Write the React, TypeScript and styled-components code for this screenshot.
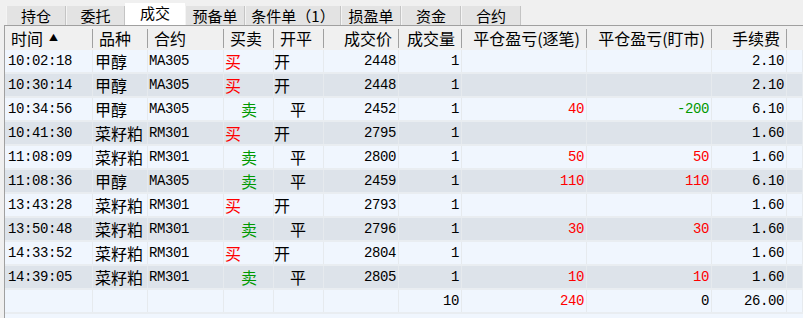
import React from "react";
import styled, { createGlobalStyle } from "styled-components";

const GlobalStyle = createGlobalStyle`
  html, body { margin: 0; padding: 0; background: #f0f0f0; }
  body { font-family: "Noto Sans CJK SC", "Noto Sans", sans-serif; }
`;

const COLS = [88, 55, 76, 50, 50, 75, 63, 125, 125, 75];
const TEMPLATE = `${COLS.map((w) => `${w}px`).join(" ")} 1fr`;

const CJK = `"Noto Sans CJK SC", "Noto Sans", sans-serif`;
const MONO = `"Liberation Mono", "Noto Sans CJK SC", monospace`;

const Page = styled.div`
  width: 803px;
  height: 318px;
  overflow: hidden;
  display: flex;
  flex-direction: column;
  background: #f0f0f0;
`;

const TabBar = styled.div`
  height: 25px;
  display: flex;
  align-items: flex-end;
  padding-left: 6px;
`;

const Tab = styled.div<{ $w: number; $active?: boolean }>`
  width: ${(p) => p.$w}px;
  height: ${(p) => (p.$active ? 22 : 19)}px;
  box-sizing: border-box;
  display: flex;
  align-items: center;
  justify-content: center;
  padding-bottom: ${(p) => (p.$active ? 3 : 1)}px;
  background: ${(p) => (p.$active ? "#ffffff" : "#e3e3e3")};
  border-right: 1px solid ${(p) => (p.$active ? "#ffffff" : "#c4c4c4")};
  border-left: 1px solid ${(p) => (p.$active ? "#ffffff" : "#f4f4f4")};
  font-family: ${CJK};
  font-size: 15px;
  line-height: 1;
  color: #000;
  white-space: nowrap;
`;

const Panel = styled.div`
  flex: 1;
  margin-left: 4px;
  border-left: 1px solid #a0a0a0;
  border-top: 1px solid #a0a0a0;
  display: flex;
  flex-direction: column;
  min-height: 0;
`;

const HeaderRow = styled.div`
  height: 24px;
  display: grid;
  grid-template-columns: ${TEMPLATE};
  align-items: center;
  background: #f0f0f0;
`;

const HeaderCell = styled.div<{ $right?: boolean; $last?: boolean }>`
  height: 19px;
  box-sizing: border-box;
  display: flex;
  align-items: center;
  justify-content: ${(p) => (p.$right ? "flex-end" : "flex-start")};
  padding: 0 6px;
  border-right: ${(p) => (p.$last ? "none" : "1px solid #a0a0a0")};
  font-family: ${CJK};
  font-size: 16px;
  line-height: 1;
  color: #000;
  white-space: nowrap;
`;

const SortMark = styled.span`
  font-size: 9px;
  margin-left: 6px;
  margin-top: -2px;
`;

const Body = styled.div`
  flex: 1;
  background: #f0f6fe;
`;

const Row = styled.div<{ $alt?: boolean }>`
  height: 24px;
  box-sizing: border-box;
  display: grid;
  grid-template-columns: ${TEMPLATE};
  background: ${(p) => (p.$alt ? "#dde3ea" : "#f0f6fe")};
  border-bottom: 2px solid #e9edf1;
`;

type Tone = "red" | "green" | "black";
const TONES: Record<Tone, string> = { red: "#ff0000", green: "#009900", black: "#000000" };

const Cell = styled.div<{ $right?: boolean; $cjk?: boolean; $indent?: number; $tone?: Tone }>`
  box-sizing: border-box;
  display: flex;
  align-items: center;
  justify-content: ${(p) => (p.$right ? "flex-end" : "flex-start")};
  padding-left: ${(p) => p.$indent ?? 2}px;
  padding-right: 2px;
  border-right: 1px solid #e6eaee;
  font-family: ${(p) => (p.$cjk ? CJK : MONO)};
  font-size: ${(p) => (p.$cjk ? 16 : 14)}px;
  line-height: 1;
  letter-spacing: ${(p) => (p.$cjk ? 0 : -0.4)}px;
  color: ${(p) => TONES[p.$tone ?? "black"]};
  white-space: nowrap;
`;

const tabs: { label: string; w: number; active?: boolean }[] = [
  { label: "持仓", w: 60 },
  { label: "委托", w: 59 },
  { label: "成交", w: 60, active: true },
  { label: "预备单", w: 60 },
  { label: "条件单（1）", w: 96 },
  { label: "损盈单", w: 60 },
  { label: "资金", w: 60 },
  { label: "合约", w: 60 },
];

const headers: { label: string; right?: boolean; sort?: boolean }[] = [
  { label: "时间", sort: true },
  { label: "品种" },
  { label: "合约" },
  { label: "买卖" },
  { label: "开平" },
  { label: "成交价", right: true },
  { label: "成交量", right: true },
  { label: "平仓盈亏(逐笔)", right: true },
  { label: "平仓盈亏(盯市)", right: true },
  { label: "手续费", right: true },
];

type Trade = {
  time: string;
  name: string;
  code: string;
  buy: boolean;
  price: string;
  vol: string;
  pnl1: string;
  pnl2: string;
  fee: string;
};

const trades: Trade[] = [
  { time: "10:02:18", name: "甲醇", code: "MA305", buy: true, price: "2448", vol: "1", pnl1: "", pnl2: "", fee: "2.10" },
  { time: "10:30:14", name: "甲醇", code: "MA305", buy: true, price: "2448", vol: "1", pnl1: "", pnl2: "", fee: "2.10" },
  { time: "10:34:56", name: "甲醇", code: "MA305", buy: false, price: "2452", vol: "1", pnl1: "40", pnl2: "-200", fee: "6.10" },
  { time: "10:41:30", name: "菜籽粕", code: "RM301", buy: true, price: "2795", vol: "1", pnl1: "", pnl2: "", fee: "1.60" },
  { time: "11:08:09", name: "菜籽粕", code: "RM301", buy: false, price: "2800", vol: "1", pnl1: "50", pnl2: "50", fee: "1.60" },
  { time: "11:08:36", name: "甲醇", code: "MA305", buy: false, price: "2459", vol: "1", pnl1: "110", pnl2: "110", fee: "6.10" },
  { time: "13:43:28", name: "菜籽粕", code: "RM301", buy: true, price: "2793", vol: "1", pnl1: "", pnl2: "", fee: "1.60" },
  { time: "13:50:48", name: "菜籽粕", code: "RM301", buy: false, price: "2796", vol: "1", pnl1: "30", pnl2: "30", fee: "1.60" },
  { time: "14:33:52", name: "菜籽粕", code: "RM301", buy: true, price: "2804", vol: "1", pnl1: "", pnl2: "", fee: "1.60" },
  { time: "14:39:05", name: "菜籽粕", code: "RM301", buy: false, price: "2805", vol: "1", pnl1: "10", pnl2: "10", fee: "1.60" },
];

const toneOf = (v: string): Tone => {
  const n = parseFloat(v);
  if (!v || isNaN(n) || n === 0) return "black";
  return n > 0 ? "red" : "green";
};

export default function App() {
  return (
    <>
      <GlobalStyle />
      <Page>
        <TabBar>
          {tabs.map((t) => (
            <Tab key={t.label} $w={t.w} $active={t.active}>
              {t.label}
            </Tab>
          ))}
        </TabBar>
        <Panel>
          <HeaderRow>
            {headers.map((h) => (
              <HeaderCell key={h.label} $right={h.right}>
                {h.label}
                {h.sort && <SortMark>▲</SortMark>}
              </HeaderCell>
            ))}
            <HeaderCell $last />
          </HeaderRow>
          <Body>
            {trades.map((t, i) => (
              <Row key={i} $alt={i % 2 === 1}>
                <Cell $indent={3}>{t.time}</Cell>
                <Cell $cjk>{t.name}</Cell>
                <Cell $indent={1}>{t.code}</Cell>
                <Cell $cjk $indent={t.buy ? 1 : 17} $tone={t.buy ? "red" : "green"}>
                  {t.buy ? "买" : "卖"}
                </Cell>
                <Cell $cjk $indent={t.buy ? 0 : 16}>
                  {t.buy ? "开" : "平"}
                </Cell>
                <Cell $right>{t.price}</Cell>
                <Cell $right>{t.vol}</Cell>
                <Cell $right $tone={toneOf(t.pnl1)}>{t.pnl1}</Cell>
                <Cell $right $tone={toneOf(t.pnl2)}>{t.pnl2}</Cell>
                <Cell $right>{t.fee}</Cell>
                <Cell />
              </Row>
            ))}
            <Row>
              <Cell />
              <Cell />
              <Cell />
              <Cell />
              <Cell />
              <Cell />
              <Cell $right>10</Cell>
              <Cell $right $tone="red">240</Cell>
              <Cell $right>0</Cell>
              <Cell $right>26.00</Cell>
              <Cell />
            </Row>
          </Body>
        </Panel>
      </Page>
    </>
  );
}
